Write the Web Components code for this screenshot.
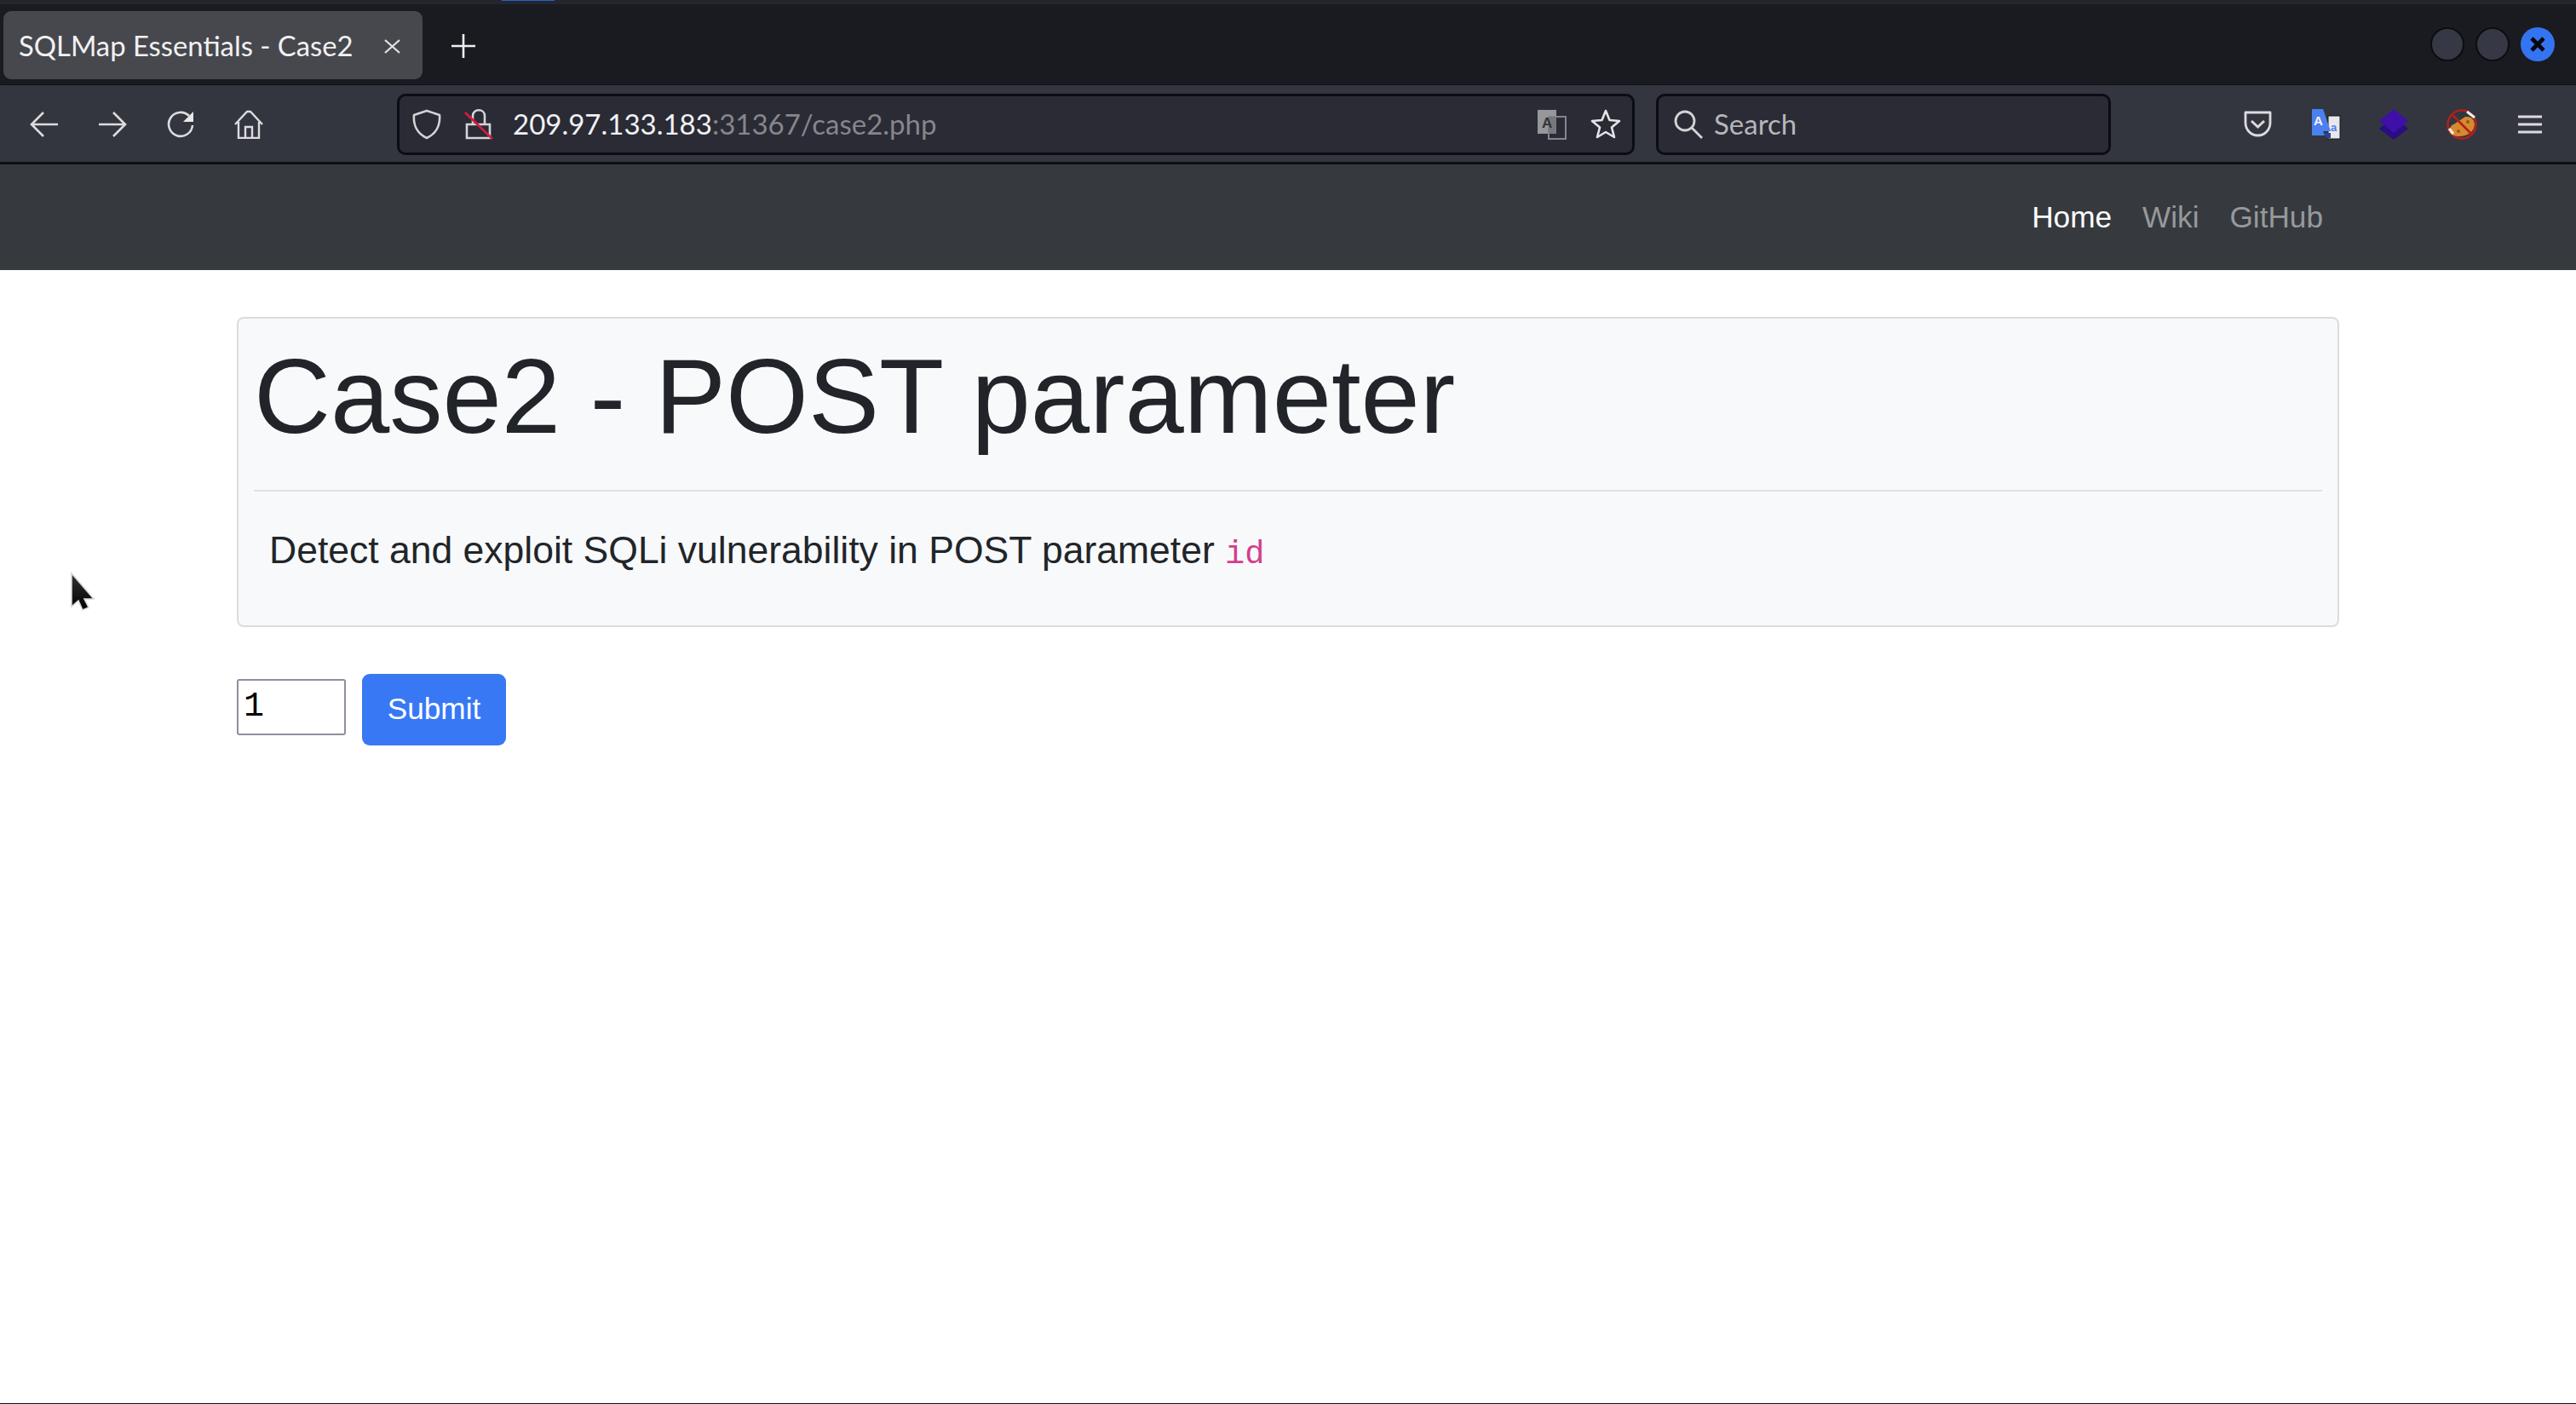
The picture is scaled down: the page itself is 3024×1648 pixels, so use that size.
<!DOCTYPE html>
<html lang="en">
<head>
<meta charset="utf-8">
<title>SQLMap Essentials - Case2</title>
<style>
    html, body { margin: 0; height: 100%; background: #fff; }
    body { display: flex; flex-direction: column; height: 1648px; overflow: hidden; }
    .wide-gap { margin-left: 134px; }
</style>
</head>
<body>

<template id="tab-bar-template">
    <style>
        :host { display: flex; flex-direction: column; flex: none; background: #1a1b20; }
        #strip {
            height: 5px;
            background:
                linear-gradient(#2c5fd8, #2c5fd8) 589px 0 / 62px 1px no-repeat,
                linear-gradient(#1d2631 1px, #24262c 1px);
        }
        #row { display: flex; height: 95px; padding-left: 4px; box-sizing: border-box; border-bottom: 1px solid #101115; }
        #tab {
            display: flex; align-items: center; box-sizing: border-box;
            width: 492px; height: 80px; margin-top: 8px; padding: 2px 26px 0 18px;
            background: #47484e; border-radius: 9px;
            color: #f1f1f3; font: 32.8px/1 Lato, sans-serif;
        }
        #title { flex: 1; white-space: nowrap; }
        #new { display: flex; margin: 35px 0 0 34px; height: 28px; }
        #controls { display: flex; gap: 13px; margin: 27px 25px 0 auto; height: 40px; }
        .dot { box-sizing: border-box; width: 40px; height: 40px; border-radius: 50%; background: #363845; border: 2px solid #0c0d10; display: flex; align-items: center; justify-content: center; }
        .dot.close { background: #3574f0; border: 0; }
    </style>
    <div id="strip"></div>
    <div id="row">
        <div id="tab">
            <span id="title"><slot></slot></span>
            <svg width="19" height="17" viewBox="0 0 19 17" fill="none" stroke="#e4e4e6" stroke-width="2.2"><path d="M1 1 18 16M18 1 1 16"/></svg>
        </div>
        <div id="new">
            <svg width="28" height="28" viewBox="0 0 28 28" fill="none" stroke="#f0f0f2" stroke-width="2.6"><path d="M14 0V28M0 14H28"/></svg>
        </div>
        <div id="controls">
            <div class="dot"></div>
            <div class="dot"></div>
            <div class="dot close">
                <svg width="18" height="18" viewBox="0 0 18 18" fill="none" stroke="#06070c" stroke-width="4.6"><path d="M2 2 16 16M16 2 2 16"/></svg>
            </div>
        </div>
    </div>
</template>

<template id="tool-bar-template">
    <style>
        :host {
            display: flex; flex: none; align-items: center; box-sizing: border-box;
            height: 93px; padding: 1px 14px 0 12px;
            background: #33363f; border-bottom: 3px solid #0f1014;
        }
        ::slotted(.spacer) { flex: 1; }
    </style>
    <slot></slot>
</template>

<template id="tool-button-template">
    <style>
        :host { display: flex; flex: none; width: 80px; height: 60px; align-items: center; justify-content: center; }
    </style>
    <slot></slot>
</template>

<template id="url-field-template">
    <style>
        :host {
            display: flex; flex: none; align-items: center; box-sizing: border-box;
            height: 72px; background: #2a2b35; border: 3px solid #0c0d12; border-radius: 10px;
            color: #f1f1f3; font: 33px/1 Lato, sans-serif;
        }
    </style>
    <slot></slot>
</template>

<template id="site-navbar-template">
    <style>
        :host {
            display: flex; flex: none; justify-content: flex-end; align-items: center; gap: 36px;
            height: 124px; padding-right: 297px; box-sizing: border-box;
            background: #363a3e; font: 35.2px/1 "Liberation Sans", Arial, sans-serif;
            color: #96999c;
        }
        ::slotted(.active) { color: #fff; }
    </style>
    <slot></slot>
</template>

<template id="jumbo-card-template">
    <style>
        :host {
            display: block; box-sizing: border-box; width: 2468px; height: 364px;
            margin: 55px 0 0 278px; padding: 0 18px;
            background: #f8f9fb; border: 2px solid #dcdcdd; border-radius: 8px;
            color: #212529; font-family: "Liberation Sans", Arial, sans-serif;
        }
        h1 { margin: 0; padding-top: 24px; height: 201px; box-sizing: border-box; font-weight: 400; font-size: 124.6px; line-height: 134px; }
        hr { margin: 0; border: 0; height: 2px; background: #dfe0e2; }
        p { margin: 0; padding: 39px 0 0 18px; font-size: 44.5px; line-height: 60px; }
        ::slotted(code) { color: #d63d8c; font: 38.7px "Liberation Mono", monospace; }
    </style>
    <h1><slot name="title"></slot></h1>
    <hr>
    <p><slot></slot></p>
</template>

<template id="case-form-template">
    <style>
        :host { display: flex; align-items: flex-start; gap: 19px; margin: 55px 0 0 278px; }
        #field {
            box-sizing: border-box; width: 128px; height: 66px; margin-top: 6px; padding: 2px 0 0 6px;
            border: 2px solid #8f8f9d; border-radius: 3px; background: #fff;
            color: #000; font: 40px/58px "Liberation Mono", monospace;
        }
        button {
            box-sizing: border-box; width: 169px; height: 84px; border: 0; border-radius: 9px; padding: 0 0 2px;
            background: #3878f5; color: #fff; font: 35.2px/1 "Liberation Sans", Arial, sans-serif;
        }
    </style>
    <div id="field"><slot name="value"></slot></div>
    <button type="button"><slot></slot></button>
</template>

<template id="mouse-cursor-template">
    <style>
        :host { position: absolute; left: 81px; top: 671px; width: 32px; height: 48px; }
    </style>
    <svg width="32" height="48" viewBox="0 0 32 48">
        <defs><linearGradient id="c" x1="0" y1="0" x2="0" y2="1"><stop offset="0" stop-color="#333"/><stop offset="1" stop-color="#000"/></linearGradient></defs>
        <path d="M3 2V41L11 34 16 45 23 42 18 32H29Z" fill="url(#c)" stroke="#d8d8d8" stroke-width="1.6"/>
    </svg>
</template>

<tab-bar>SQLMap Essentials - Case2</tab-bar>

<tool-bar>
    <tool-button>
        <svg width="34" height="32" viewBox="0 0 34 32" fill="none" stroke="#dcdcde" stroke-width="2.6"><path d="M33 16H3M16 2 2 16 16 30"/></svg>
    </tool-button>
    <tool-button>
        <svg width="34" height="32" viewBox="0 0 34 32" fill="none" stroke="#dcdcde" stroke-width="2.6"><path d="M1 16H31M18 2 32 16 18 30"/></svg>
    </tool-button>
    <tool-button>
        <svg width="32" height="32" viewBox="0 0 32 32" fill="none" stroke="#dcdcde" stroke-width="2.6"><path d="M26 6A14 14 0 1 0 30 17"/><path d="M31 1V13H19Z" fill="#e8e8ea" stroke="none"/></svg>
    </tool-button>
    <tool-button>
        <svg width="34" height="34" viewBox="0 0 34 34" fill="none" stroke="#dcdcde" stroke-width="2.4"><path d="M1 17 15 2H19L33 17M5 14V33H29V14M13 33V20H21V33"/></svg>
    </tool-button>

    <url-field class="wide-gap" style="width:1453px">
        <svg style="margin:0 0 0 15px;flex:none" width="34" height="36" viewBox="0 0 34 36" fill="none" stroke="#d4d4d6" stroke-width="2.6"><path d="M17 2 32 7C33 19 28 29 17 34 6 29 1 19 2 7Z" stroke-linejoin="round"/></svg>
        <svg style="margin:0 0 0 27px;flex:none" width="34" height="37" viewBox="0 0 34 37" fill="none"><path d="M3 19H30V35H3ZM10 19V9C10 0 24 0 24 9V19" stroke="#d4d4d6" stroke-width="2.6"/><path d="M1 5 33 36" stroke="#d01c44" stroke-width="2.8"/></svg>
        <span style="margin-left:23px;flex:none;white-space:nowrap">209.97.133.183<span style="color:#85868c">:31367/case2.php</span></span>
        <svg style="margin-left:auto;flex:none" width="35" height="36" viewBox="0 0 35 36"><rect x="1" y="1" width="22" height="28" fill="#96979b"/><rect x="14" y="9" width="20" height="26" fill="#2a2b35" stroke="#85868c" stroke-width="2"/><rect x="14" y="9" width="9" height="20" fill="#77787c"/><text x="6" y="22" font-family="Liberation Sans" font-weight="700" font-size="17" fill="#33343a">A</text></svg>
        <svg style="margin:0 13px 0 28px;flex:none" width="36" height="36" viewBox="0 0 36 36" fill="none" stroke="#e4e4e6" stroke-width="2.6"><path d="M18 2 22.5 13 34 14 25 21.5 28 33 18 27 8 33 11 21.5 2 14 13.5 13Z" stroke-linejoin="round"/></svg>
    </url-field>

    <url-field style="width:534px;margin-left:25px;color:#b5b6ba">
        <svg style="margin-left:18px;flex:none" width="34" height="34" viewBox="0 0 34 34" fill="none" stroke="#d4d4d6" stroke-width="2.8"><circle cx="13" cy="13" r="11"/><path d="M21 21 33 33"/></svg>
        <span style="margin-left:13px">Search</span>
    </url-field>

    <div class="spacer"></div>

    <tool-button>
        <svg width="33" height="31" viewBox="0 0 33 31" fill="none" stroke="#dcdcde" stroke-width="2.8"><path d="M2 2H31V14C31 22 25 29 16.5 29S2 22 2 14Z" stroke-linejoin="round"/><path d="M9 12 16.5 19 24 12" stroke-width="3"/></svg>
    </tool-button>
    <tool-button>
        <svg width="36" height="36" viewBox="0 0 36 36"><rect x="21" y="8" width="14" height="27" fill="#e8e8ea" stroke="#17181c" stroke-width="1"/><path d="M2 1H15L24 27H15L17 32H2Z" fill="#4a80f0" transform="translate(0 -1)"/><path d="M16 28H24V34H20Z" fill="#27459a"/><text x="4" y="19" font-family="Liberation Sans" font-weight="700" font-size="15" fill="#f4f6ff">A</text><text x="24" y="26" font-family="Liberation Sans" font-weight="700" font-size="13" fill="#4a80f0">a</text></svg>
    </tool-button>
    <tool-button>
        <svg width="36" height="36" viewBox="0 0 36 36"><path d="M18 9 35 23 18 36 1 23Z" fill="#2a0d80"/><path d="M18 0 35 14 18 28 1 14Z" fill="#3f10a8"/></svg>
    </tool-button>
    <tool-button>
        <svg width="36" height="36" viewBox="0 0 36 36"><circle cx="18" cy="18" r="16.5" fill="#33363f" stroke="#b0201e" stroke-width="2.6"/><path d="M4 28 Q2 20 10 17 L22 9 Q32 8 33 18 Q32 28 22 31 Q10 34 4 28Z" fill="#d8892e"/><path d="M24 3 33 10" stroke="#f0f0f0" stroke-width="3"/><path d="M3 23 8 29" stroke="#f0f0f0" stroke-width="3"/><circle cx="14" cy="26" r="2" fill="#8a5a20"/><circle cx="25" cy="15" r="2" fill="#8a5a20"/><path d="M7 7 29 29" stroke="#b0201e" stroke-width="2.6"/></svg>
    </tool-button>
    <tool-button>
        <svg width="28" height="22" viewBox="0 0 28 22" fill="none" stroke="#dcdcde" stroke-width="3"><path d="M0 2H28M0 11H28M0 20H28"/></svg>
    </tool-button>
</tool-bar>

<site-navbar>
    <span class="active">Home</span>
    <span>Wiki</span>
    <span>GitHub</span>
</site-navbar>

<jumbo-card>
    <span slot="title">Case2 - POST parameter</span>
    Detect and exploit SQLi vulnerability in POST parameter <code>id</code>
</jumbo-card>

<case-form>
    <span slot="value">1</span>
    Submit
</case-form>

<mouse-cursor></mouse-cursor>

<div style="margin-top:auto;height:1px;background:#111;flex:none"></div>

<script>
"use strict";

class TemplatedElement extends HTMLElement {
    constructor(templateId) {
        super();
        this.attachShadow({ mode: "open" });
        this.shadowRoot.appendChild(document.getElementById(templateId).content.cloneNode(true));
    }
}

const elements = {
    "tab-bar": "tab-bar-template",
    "tool-bar": "tool-bar-template",
    "tool-button": "tool-button-template",
    "url-field": "url-field-template",
    "site-navbar": "site-navbar-template",
    "jumbo-card": "jumbo-card-template",
    "case-form": "case-form-template",
    "mouse-cursor": "mouse-cursor-template"
};

for (const [name, templateId] of Object.entries(elements)) {
    customElements.define(name, class extends TemplatedElement {
        constructor() {
            super(templateId);
        }
    });
}
</script>
</body>
</html>
